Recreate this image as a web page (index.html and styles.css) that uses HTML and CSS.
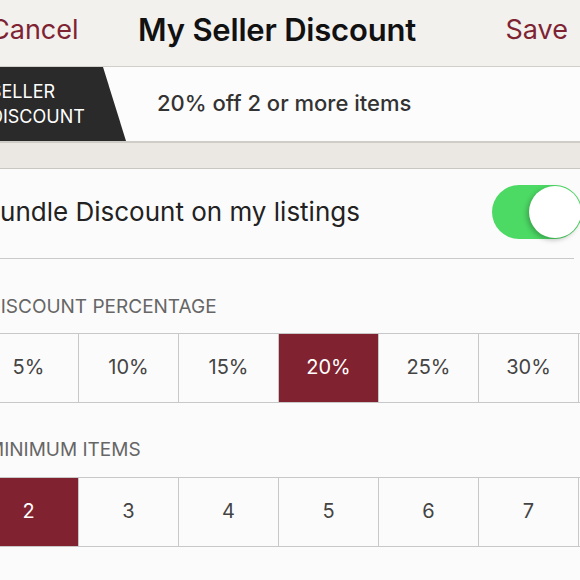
FILE: index.html
```html
<!DOCTYPE html>
<html>
<head>
<meta charset="utf-8">
<link rel="stylesheet" href="styles.css">
</head>
<body>
<div class="screen">
  <header class="nav">
    <span class="nav-btn cancel">Cancel</span>
    <span class="nav-title">My Seller Discount</span>
    <span class="nav-btn save">Save</span>
  </header>
  <div class="banner">
    <div class="tag"><span>SELLER</span><span>DISCOUNT</span></div>
    <div class="banner-text">20% off 2 or more items</div>
  </div>
  <div class="band"></div>
  <div class="toggle-row">
    <span class="toggle-label">Bundle Discount on my listings</span>
    <span class="switch"><span class="knob"></span></span>
  </div>
  <div class="section-label">DISCOUNT PERCENTAGE</div>
  <div class="seg">
    <div class="cell">5%</div>
    <div class="cell">10%</div>
    <div class="cell">15%</div>
    <div class="cell on">20%</div>
    <div class="cell">25%</div>
    <div class="cell">30%</div>
  </div>
  <div class="section-label second">MINIMUM ITEMS</div>
  <div class="seg second">
    <div class="cell on">2</div>
    <div class="cell">3</div>
    <div class="cell">4</div>
    <div class="cell">5</div>
    <div class="cell">6</div>
    <div class="cell">7</div>
  </div>
</div>
</body>
</html>
```
FILE: styles.css
```css
html, body {
  margin: 0;
  padding: 0;
  width: 580px;
  height: 580px;
  overflow: hidden;
  background: #fcfbfb;
  font-family: Inter, "Liberation Sans", sans-serif;
}
.screen {
  width: 580px;
  display: flex;
  flex-direction: column;
}
.nav {
  height: 66px;
  background: #f3f1ee;
  border-bottom: 1px solid #d2cfcb;
  display: flex;
  align-items: center;
  justify-content: space-between;
  padding: 0 12px 0 0;
  box-sizing: content-box;
}
.nav-btn {
  font-size: 27px;
  color: #7e2332;
  margin-top: -8px;
}
.cancel { margin-left: -10px; }
.nav-title {
  font-size: 31px;
  font-weight: 600;
  color: #111;
  margin-top: -8px;
  margin-left: -30px;
  letter-spacing: -0.2px;
}
.banner {
  height: 74px;
  background: #fdfcfc;
  border-bottom: 2px solid #cfccc8;
  display: flex;
  align-items: center;
}
.tag {
  width: 126px;
  height: 74px;
  background: #2a2a2a;
  clip-path: polygon(0 0, 103px 0, 126px 100%, 0 100%);
  color: #fff;
  font-size: 18px;
  line-height: 25px;
  display: flex;
  flex-direction: column;
  justify-content: center;
  box-sizing: border-box;
  text-indent: -10px;
}
.banner-text {
  margin-left: 31px;
  font-size: 22px;
  font-weight: 500;
  color: #333;
  margin-top: -2px;
}
.band {
  height: 25px;
  background: #ebe8e3;
  border-bottom: 1px solid #cac7c3;
}
.toggle-row {
  height: 89px;
  display: flex;
  align-items: center;
  justify-content: space-between;
  margin-right: 6px;
  border-bottom: 1px solid #c9c9c9;
}
.toggle-label {
  font-size: 26px;
  color: #222;
  margin-left: -17px;
  margin-top: -5px;
}
.switch {
  width: 90px;
  height: 54px;
  border-radius: 27px;
  background: #4cd964;
  margin-right: -8px;
  margin-top: -3px;
  display: flex;
  align-items: center;
  justify-content: flex-end;
}
.knob {
  width: 52px;
  height: 52px;
  border-radius: 50%;
  background: #fff;
  margin-right: 1px;
  box-shadow: -2px 2px 5px rgba(0,0,0,0.25);
}
.section-label {
  font-size: 19px;
  color: #666;
  margin: 37px 0 0 -13px;
  line-height: 22px;
}
.section-label.second { margin-top: 36px; }
.seg {
  margin: 15px 0 0 -21px;
  width: 601px;
  display: grid;
  grid-template-columns: repeat(6, 100px);
  height: 70px;
  border-top: 1px solid #c8c8c8;
  border-bottom: 1px solid #c8c8c8;
  box-sizing: border-box;
}
.seg.second { margin-top: 16px; }
.cell {
  border-right: 1px solid #c8c8c8;
  display: flex;
  align-items: center;
  justify-content: center;
  font-size: 20px;
  color: #444;
  padding-bottom: 3px;
}
.cell.on {
  background: #80222f;
  color: #fff;
}
```
